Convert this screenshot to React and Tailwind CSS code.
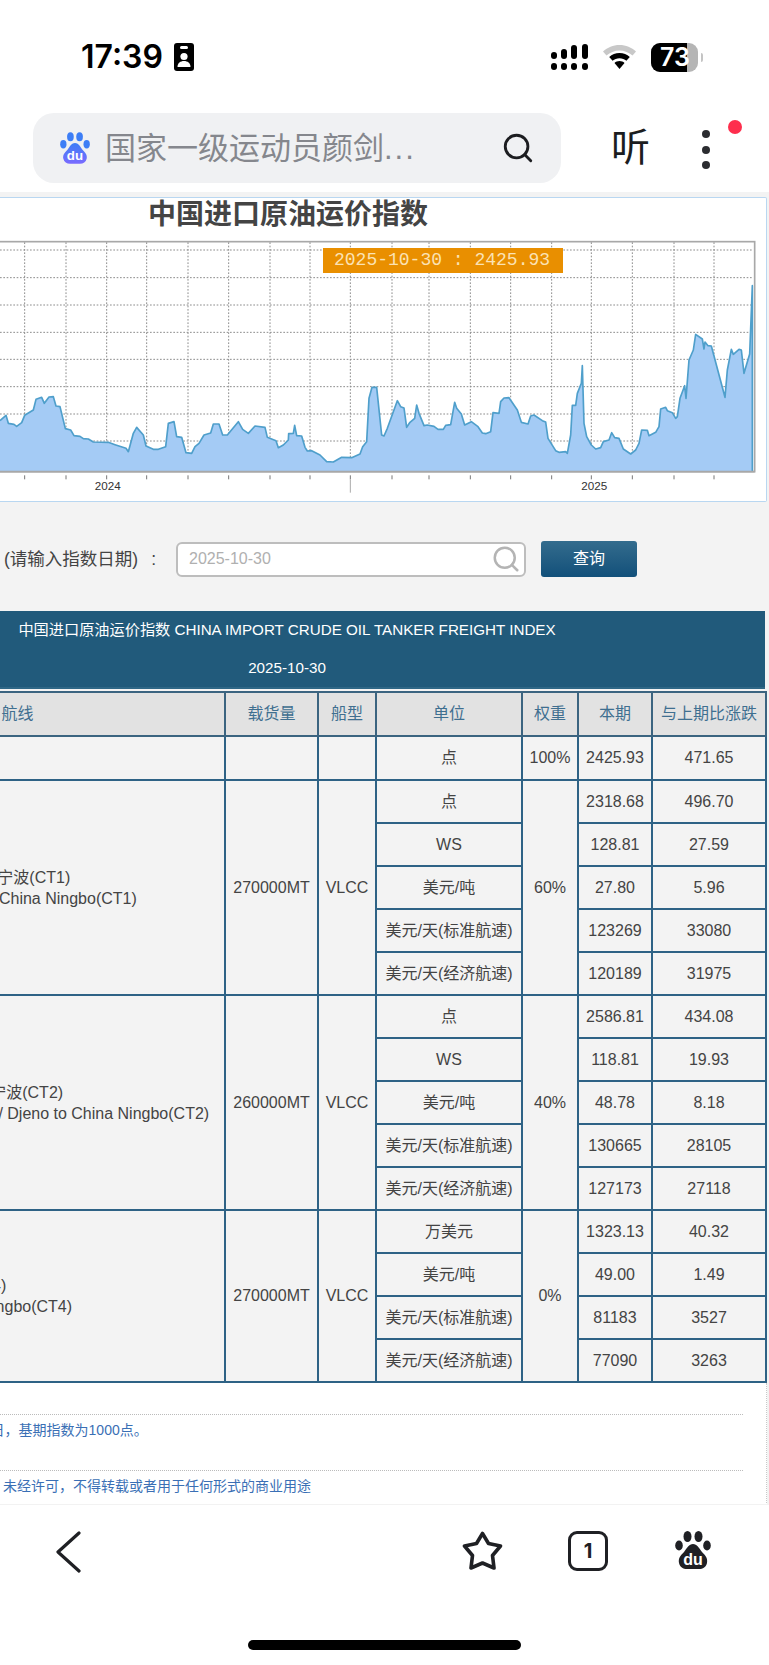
import { Search } from "lucide-react";

const cjk = "font-['Liberation_Sans','Noto_Sans_CJK_SC',sans-serif]";

const leftPoints =
  "18,676 25,700 42,703 50,709 65,698 74,676 100,660 108,628 125,622 133,640 147,621 160,620 168,648 180,650 196,716 212,720 222,737 240,739 250,746 265,747 280,756 325,757 345,764 378,775 385,785 400,730 410,712 430,735 438,768 460,778 475,778 497,770 505,700 522,695 530,740 545,742 558,788 575,790 585,770 597,760 612,735 632,729 640,702 657,702 668,735 682,735 715,695 728,718 745,730 765,708 795,712 802,742 828,752 835,773 850,765 865,750 866,731 880,730 884,706 890,737 905,738 915,772 922,783 935,782 960,795 980,815 1000,816 1025,802 1055,803 1080,792 1088,770 1100,755 1107,625 1116,592 1130,592 1145,735";

const rightPoints = [
  [0, 738], [10, 715], [40, 632], [50, 650], [60, 654], [68, 712], [78, 697], [92, 685], [98, 645], [105, 670], [120, 707], [130, 705], [150, 709], [162, 718], [178, 718], [185, 706], [200, 704], [212, 637], [218, 655], [232, 672], [242, 705], [262, 695], [282, 710], [295, 729], [305, 731], [320, 725], [327, 668], [345, 670], [350, 635], [360, 624], [375, 623], [400, 660], [412, 697], [432, 702], [440, 678], [450, 675], [475, 692], [485, 696], [492, 745], [515, 782], [525, 787], [545, 785], [550, 790], [560, 735], [565, 646], [575, 646], [580, 610], [592, 580], [595, 527], [600, 700], [608, 740], [622, 765], [635, 777], [650, 773], [658, 755], [675, 750], [683, 728], [692, 743], [705, 745], [718, 777], [740, 792], [755, 780], [765, 760], [773, 720], [790, 721], [795, 737], [815, 727], [825, 710], [830, 657], [845, 652], [850, 662], [865, 668], [875, 685], [880, 680], [888, 625], [902, 587], [906, 625], [915, 510], [928, 480], [935, 433], [955, 447], [960, 477], [963, 456], [972, 467], [982, 468], [1023, 622], [1030, 540], [1042, 478], [1048, 493], [1065, 478], [1072, 480], [1080, 550], [1097, 492], [1105, 287], [1105, 845],
]
  .map(([x, y]) => `${x + 1152},${y}`)
  .join(" ");

const gridX = [74, 198, 320, 440, 564, 686, 810, 930, 1051, 1176, 1287, 1411, 1532, 1655, 1774, 1897, 2022, 2142];
const gridY = [180, 263, 345, 427, 508, 590, 672, 753];

function Chart() {
  return (
    <svg viewBox="0 150 2307 780" className="block w-[769px] h-[260px]">
      <rect x="-5" y="155" width="2269" height="690" fill="#fff" stroke="#a8a8a8" strokeWidth="5" />
      {gridY.map((y) => (
        <line key={y} x1="0" x2="2260" y1={y} y2={y} stroke="#8c8c8c" strokeWidth="3" strokeDasharray="5 5" />
      ))}
      {gridX.map((x) => (
        <g key={x}>
          <line x1={x} x2={x} y1="157" y2="843" stroke="#8c8c8c" strokeWidth="3" strokeDasharray="5 5" />
          <line x1={x} x2={x} y1="856" y2="868" stroke="#777" strokeWidth="3" />
        </g>
      ))}
      <line x1="1051" x2="1051" y1="868" y2="908" stroke="#aaa" strokeWidth="3" />
      <polygon points={`0,843 0,692 ${leftPoints} ${rightPoints}`} fill="#a4cbf5" />
      <polyline points={`0,692 ${leftPoints} ${rightPoints}`} fill="none" stroke="#4f9fcb" strokeWidth="5" strokeLinejoin="round" />
      <line x1="-5" x2="2264" y1="845" y2="845" stroke="#a8a8a8" strokeWidth="5" />
      <text x="323" y="900" textAnchor="middle" fontSize="35" fill="#333" fontFamily="Liberation Sans">2024</text>
      <text x="1783" y="900" textAnchor="middle" fontSize="35" fill="#333" fontFamily="Liberation Sans">2025</text>
    </svg>
  );
}

function BaiduPaw({ className, gradientId, top, bottom }) {
  return (
    <svg viewBox="0 0 36 38" className={className}>
      <defs>
        <linearGradient id={gradientId} x1="0" y1="0" x2="0" y2="1">
          <stop offset="0" stopColor={top} />
          <stop offset="1" stopColor={bottom} />
        </linearGradient>
      </defs>
      <ellipse cx="12.500" cy="5.500" rx="4" ry="5.500" fill={top} />
      <ellipse cx="23.500" cy="5.500" rx="4" ry="5.500" fill={top} />
      <ellipse cx="4" cy="14.500" rx="3.800" ry="5" fill={top} />
      <ellipse cx="32" cy="14.500" rx="3.800" ry="5" fill={top} />
      <path d="M18 13c4 0 6 4 9 8 3 3 6 6 5 11-1 4-4 6-8 6H12c-4 0-7-2-8-6-1-5 2-8 5-11 3-4 5-8 9-8z" fill={`url(#${gradientId})`} />
      <text x="18" y="34" textAnchor="middle" fontSize="16" fontWeight="700" fill="#fff" fontFamily="Liberation Sans">du</text>
    </svg>
  );
}

function StatusBar() {
  return (
    <div className="h-[113px] flex items-start justify-between pt-[43px] pl-[81px] pr-[66px]">
      <div className="flex items-center gap-[11px] h-[28px]">
        <span className="font-['Inter',sans-serif] font-semibold text-[32px] leading-none text-black">17:39</span>
        <svg viewBox="0 0 20 28" className="w-[20px] h-[28px]">
          <rect width="20" height="28" rx="3" fill="#000" />
          <rect x="6" y="3" width="8" height="3" rx="1.500" fill="#fff" />
          <circle cx="10" cy="13.500" r="3.600" fill="#fff" />
          <path d="M3.500 24c0-4 3-6 6.500-6s6.500 2 6.500 6z" fill="#fff" />
        </svg>
      </div>
      <div className="flex items-center gap-[15px] h-[28px]">
        <svg viewBox="0 0 37 27" className="w-[37px] h-[27px]">
          {[
            [0, 8],
            [10, 5],
            [20, 1],
            [31, 0],
          ].map(([x, y]) => (
            <rect key={x} x={x} y={y} width="6" height={15 - y} rx="3" fill="#000" />
          ))}
          {[0, 10, 20, 31].map((x) => (
            <rect key={x} x={x} y="19" width="6" height="7" rx="3" fill="#000" />
          ))}
        </svg>
        <svg viewBox="0 0 33 24" className="w-[33px] h-[24px]">
          <path d="M16.500 0C10 0 4.500 2.500 0 6.500l3.500 4C7 7.500 11.500 5.500 16.500 5.500s9.500 2 13 5l3.500-4C28.500 2.500 23 0 16.500 0z" fill="#c8c8c8" />
          <path d="M16.500 8c-4 0-7.500 1.500-10.300 4l3.400 3.800c1.800-1.600 4.200-2.600 6.900-2.600s5.100 1 6.900 2.600l3.400-3.800C24 9.500 20.500 8 16.500 8z" fill="#000" />
          <path d="M16.500 16c-2 0-3.700.7-5 1.900l5 6.100 5-6.100c-1.300-1.200-3-1.900-5-1.900z" fill="#000" />
        </svg>
        <div className="flex items-center">
          <div className="relative w-[47px] h-[29px] rounded-[9px] overflow-hidden bg-[#b5b5b5]">
            <div className="h-full w-[36px] bg-black" />
            <span className="absolute left-[9px] top-0 font-['Inter',sans-serif] font-semibold text-[25px] leading-[29px] text-white">73</span>
          </div>
          <div className="w-[2px] h-[9px] ml-[3px] rounded-r bg-[#c4c4c4]" />
        </div>
      </div>
    </div>
  );
}

function AddressBar() {
  return (
    <div className={`h-[79px] flex items-start pl-[33px] ${cjk}`}>
      <div className="w-[528px] h-[70px] rounded-[21px] bg-[#f0f1f3] flex items-center pl-[27px] pr-[26px]">
        <BaiduPaw className="w-[30px] h-[32px] shrink-0" gradientId="pawColor" top="#3d7ef6" bottom="#7a6bff" />
        <span className="ml-[15px] flex-1 text-[31px] leading-none text-[#85878d] whitespace-nowrap">
          国家一级运动员颜剑<span className="tracking-[2px]">...</span>
        </span>
        <Search className="w-[34px] h-[34px] text-[#1c1d20]" strokeWidth={2} />
      </div>
      <span className="ml-[50px] mt-[13px] text-[39px] leading-[44px] text-[#1c1d20]">听</span>
      <div className="ml-[52px] mt-[17px] flex flex-col gap-[7.500px]">
        <span className="w-[8px] h-[8px] rounded-full bg-[#2b2c30]" />
        <span className="w-[8px] h-[8px] rounded-full bg-[#2b2c30]" />
        <span className="w-[8px] h-[8px] rounded-full bg-[#2b2c30]" />
      </div>
      <span className="ml-[18px] mt-[7px] w-[14px] h-[14px] rounded-full bg-[#fe2e4d]" />
    </div>
  );
}

const thClass = "border-2 border-[#3b6480] bg-[#e2e2e2] text-[#3f6f90] font-normal text-center";
const tdClass = "border-2 border-[#2e6285] bg-[#f3f3f3] text-[#444] text-center";

const routes = [
  {
    lines: ["中东湾拉斯坦努拉-中国宁波(CT1)", "Ras Tanura, Arabian to China Ningbo(CT1)"],
    cargo: "270000MT",
    weight: "60%",
    rows: [
      ["点", "2318.68", "496.70"],
      ["WS", "128.81", "27.59"],
      ["美元/吨", "27.80", "5.96"],
      ["美元/天(标准航速)", "123269", "33080"],
      ["美元/天(经济航速)", "120189", "31975"],
    ],
  },
  {
    lines: ["西非马隆格/ 杰诺-中国宁波(CT2)", "West Africa's Malongo, / Djeno to China Ningbo(CT2)"],
    cargo: "260000MT",
    weight: "40%",
    rows: [
      ["点", "2586.81", "434.08"],
      ["WS", "118.81", "19.93"],
      ["美元/吨", "48.78", "8.18"],
      ["美元/天(标准航速)", "130665", "28105"],
      ["美元/天(经济航速)", "127173", "27118"],
    ],
  },
  {
    lines: ["美国墨西哥湾-宁波(CT4)", "U.S.A. Gulf to China Ningbo(CT4)"],
    cargo: "270000MT",
    weight: "0%",
    rows: [
      ["万美元", "1323.13", "40.32"],
      ["美元/吨", "49.00", "1.49"],
      ["美元/天(标准航速)", "81183", "3527"],
      ["美元/天(经济航速)", "77090", "3263"],
    ],
  },
];

function IndexTable() {
  return (
    <div className={`-ml-[191px] w-[956px] ${cjk}`}>
      <div className="h-[78px] bg-[#215a7b] border-b-2 border-[#2f6786] text-white text-[15.200px] text-center">
        <div className="pt-[7px] leading-[24px]">中国进口原油运价指数 CHINA IMPORT CRUDE OIL TANKER FREIGHT INDEX</div>
        <div className="pt-[14px] leading-[24px]">2025-10-30</div>
      </div>
      <table className="mt-[2px] w-[956px] table-fixed border-collapse text-[16px] leading-[20px]">
        <colgroup>
          <col className="w-[415px]" />
          <col className="w-[93px]" />
          <col className="w-[58px]" />
          <col className="w-[146px]" />
          <col className="w-[56px]" />
          <col className="w-[74px]" />
          <col className="w-[114px]" />
        </colgroup>
        <thead>
          <tr className="h-[44px]">
            <th className={thClass}>航线</th>
            <th className={thClass}>载货量</th>
            <th className={thClass}>船型</th>
            <th className={thClass}>单位</th>
            <th className={thClass}>权重</th>
            <th className={thClass}>本期</th>
            <th className={thClass}>与上期比涨跌</th>
          </tr>
        </thead>
        <tbody>
          <tr className="h-[44px]">
            <td className={tdClass}></td>
            <td className={tdClass}></td>
            <td className={tdClass}></td>
            <td className={tdClass}>点</td>
            <td className={tdClass}>100%</td>
            <td className={tdClass}>2425.93</td>
            <td className={tdClass}>471.65</td>
          </tr>
          {routes.map((route) =>
            route.rows.map((row, i) => (
              <tr key={route.lines[0] + i} className="h-[43px]">
                {i === 0 && (
                  <>
                    <td rowSpan={route.rows.length} className={`${tdClass} !text-left pl-[21px]`}>
                      {route.lines.map((line) => (
                        <div key={line} className="whitespace-nowrap leading-[21px]">{line}</div>
                      ))}
                    </td>
                    <td rowSpan={route.rows.length} className={tdClass}>{route.cargo}</td>
                    <td rowSpan={route.rows.length} className={tdClass}>VLCC</td>
                  </>
                )}
                <td className={tdClass}>{row[0]}</td>
                {i === 0 && (
                  <td rowSpan={route.rows.length} className={tdClass}>{route.weight}</td>
                )}
                <td className={tdClass}>{row[1]}</td>
                <td className={tdClass}>{row[2]}</td>
              </tr>
            ))
          )}
        </tbody>
      </table>
    </div>
  );
}

function Notes() {
  return (
    <div className={`w-[806px] h-[130px] -ml-[39px] pt-[31px] bg-white border-r border-dotted border-[#c8c8c8] text-[14px] leading-[20px] text-[#3a6fb5] ${cjk}`}>
      <div className="w-[782px] h-[56px] border-t border-dotted border-[#bbb] pt-[5px] whitespace-nowrap">1月4日，基期指数为1000点。</div>
      <div className="w-[782px] border-t border-dotted border-[#bbb] pt-[5px] whitespace-nowrap">所有，未经许可，不得转载或者用于任何形式的商业用途</div>
    </div>
  );
}

function BottomBar() {
  return (
    <div className="h-[161px] bg-white border-t border-[#f2f2f2] pt-[26px]">
      <div className="flex items-start h-[42px] pl-[55px] text-[#1f2024]">
        <svg viewBox="0 0 26 42" className="w-[26px] h-[42px]" fill="none" stroke="currentColor" strokeWidth="3.200" strokeLinecap="round" strokeLinejoin="round">
          <path d="M24 2 3 21l21 19" />
        </svg>
        <svg viewBox="0 0 41 40" className="ml-[381px] w-[41px] h-[40px]" fill="none" stroke="currentColor" strokeWidth="3.600" strokeLinejoin="round">
          <path d="M20.500 2.500 26.500 12.500 38.500 15 30.500 24.500 32 37 20.500 32 9 37 10.500 24.500 2.500 15 14.500 12.500z" />
        </svg>
        <div className="ml-[65px] w-[40px] h-[40px] rounded-[9px] border-[3.500px] border-current flex items-center justify-center font-['Inter',sans-serif] font-bold text-[20px] leading-none">1</div>
        <BaiduPaw className="ml-[67px] w-[36px] h-[38px]" gradientId="pawDark" top="#1f2024" bottom="#1f2024" />
      </div>
      <div className="mt-[67px] ml-[248px] w-[273px] h-[10px] rounded-full bg-black" />
    </div>
  );
}

export default function App() {
  return (
    <div className="w-[769px] h-[1665px] overflow-hidden bg-white">
      <StatusBar />
      <AddressBar />
      <div className="h-[1312px] bg-[#f3f3f3] overflow-hidden pt-[5px]">
        <div className="relative h-[305px] w-[767px] bg-white border-y border-r border-[#b9d7f1] rounded-r-[2px]">
          <h1 className={`pl-[148px] text-[28px] leading-[34px] font-bold text-[#444] ${cjk}`}>中国进口原油运价指数</h1>
          <div className="mt-[8px]">
            <Chart />
          </div>
          <div className="absolute left-[323px] top-[50px] w-[240px] h-[25px] pl-[11px] bg-[#e98f00] font-['Liberation_Mono',monospace] text-[18px] leading-[25px] text-[#fbe2b4] whitespace-nowrap">
            2025-10-30 : 2425.93
          </div>
        </div>
        <div className={`h-[109px] pt-[5px] flex items-center ${cjk}`}>
          <span className="pl-[4px] w-[163px] shrink-0 text-[17.500px] text-[#444] whitespace-nowrap">
            (请输入指数日期)<span className="ml-[13px]">:</span>
          </span>
          <div className="ml-[13px] w-[350px] h-[35px] rounded-[6px] border-2 border-[#bdbdbd] bg-white flex items-center justify-between pl-[11px] pr-[3px]">
            <span className="text-[16px] text-[#b0b0b0]">2025-10-30</span>
            <Search className="w-[30px] h-[30px] text-[#b4b4b4]" strokeWidth={2} />
          </div>
          <div className="ml-[15px] w-[96px] h-[36px] rounded-[3px] bg-gradient-to-b from-[#336c8d] to-[#11507a] text-white text-[16px] flex items-center justify-center">查询</div>
        </div>
        <IndexTable />
        <Notes />
      </div>
      <BottomBar />
    </div>
  );
}
